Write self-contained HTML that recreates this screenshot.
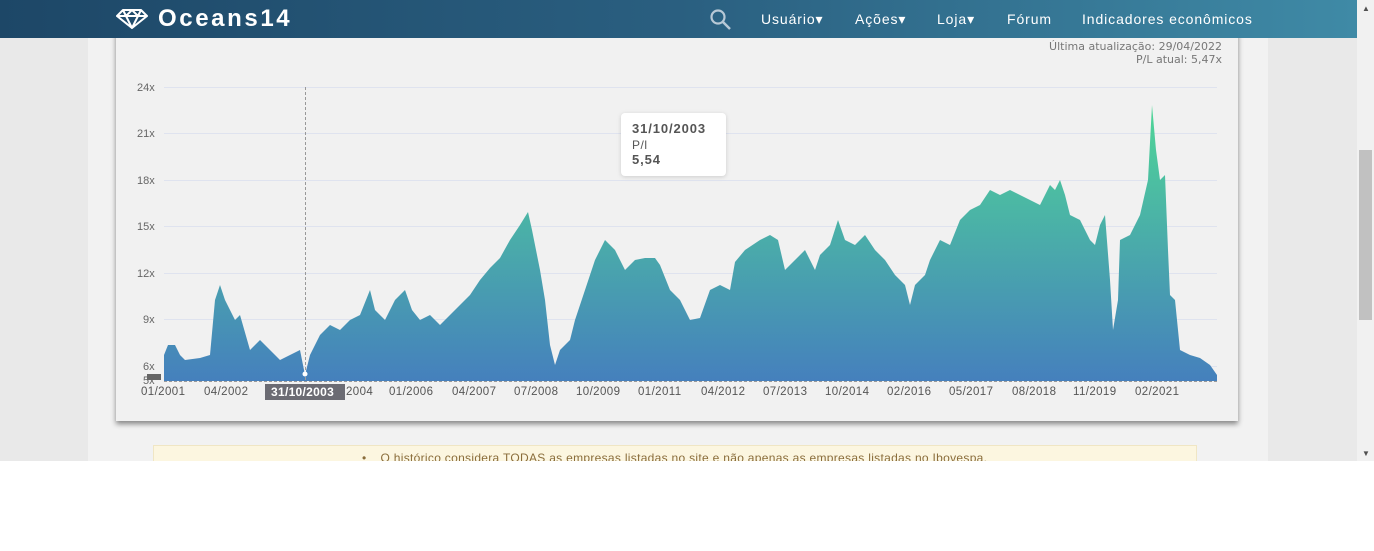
<!DOCTYPE html>
<html><head><meta charset="utf-8"><style>
*{margin:0;padding:0;box-sizing:border-box}
body{width:1374px;height:551px;background:#fff;font-family:"Liberation Sans",sans-serif;overflow:hidden;position:relative}
#screen{position:absolute;left:0;top:0;width:1357px;height:461px;background:#e9e9e9;overflow:hidden}
#col{position:absolute;left:88px;top:0;width:1180px;height:461px;background:#f2f2f2}
#nav{position:absolute;left:0;top:0;width:1357px;height:38px;background:linear-gradient(90deg,#1d4767 0%,#2a5f80 50%,#3f8aa6 100%)}
.logo{position:absolute;left:158px;top:5px;color:#fff;font-weight:bold;font-size:24px;letter-spacing:2.6px}
.menu{position:absolute;top:11px;color:#fff;font-size:14px;letter-spacing:0.9px}
#card{position:absolute;left:116px;top:30px;width:1122px;height:391px;background:#f1f1f1;box-shadow:0 3px 5px rgba(0,0,0,.45)}
.upd{position:absolute;right:135px;font-size:11px;color:#777;font-family:"DejaVu Sans",sans-serif;text-align:right}
.note{position:absolute;left:153px;top:445px;width:1044px;height:20px;background:#fcf6e0;border:1px solid #f0e6c4;font-size:12px;letter-spacing:0.3px;color:#8a6d3b;padding:5px 0 0 208px;white-space:nowrap}
#sb{position:absolute;left:1357px;top:0;width:17px;height:461px;background:#f1f1f1}
#sb .th{position:absolute;left:2px;top:150px;width:13px;height:170px;background:#c1c1c1}
</style></head><body>
<div id="screen">
<div id="col"></div>
<div id="card"></div>
<div class="upd" style="top:40px;right:135px">Última atualização: 29/04/2022</div>
<div class="upd" style="top:53px;right:135px">P/L atual: 5,47x</div>
<svg style="position:absolute;left:0;top:0" width="1357" height="461">
<defs><linearGradient id="g" x1="0" y1="100" x2="0" y2="381" gradientUnits="userSpaceOnUse"><stop offset="0" stop-color="#4fd896"/><stop offset="1" stop-color="#4580bd"/></linearGradient></defs>
<g stroke="#dfe3ef" stroke-width="1">
<line x1="164" y1="87.5" x2="1217" y2="87.5"/><line x1="164" y1="133.5" x2="1217" y2="133.5"/><line x1="164" y1="180.5" x2="1217" y2="180.5"/><line x1="164" y1="226.5" x2="1217" y2="226.5"/><line x1="164" y1="273.5" x2="1217" y2="273.5"/><line x1="164" y1="319.5" x2="1217" y2="319.5"/><line x1="164" y1="366.5" x2="1217" y2="366.5"/>
</g>
<g font-size="11" fill="#666" font-family="Liberation Sans,sans-serif">
<text x="137" y="91">24x</text><text x="137" y="137">21x</text><text x="137" y="184">18x</text><text x="137" y="230">15x</text><text x="137" y="277">12x</text><text x="143" y="323">9x</text><text x="143" y="370">6x</text><text x="143" y="384">5x</text>
</g>
<polygon fill="url(#g)" points="164,381 164,355 168,345 175,345 180,355 185,360 200,358 210,355 215,300 220,285 225,300 235,320 240,315 250,350 260,340 270,350 280,360 290,355 300,350 305,375 310,355 320,335 330,325 340,330 350,320 360,315 370,290 375,310 385,320 395,300 405,290 412,310 420,320 430,315 440,325 450,315 460,305 470,295 480,280 490,268 500,258 510,240 520,225 528,212 532,230 540,270 545,300 550,345 555,365 560,350 570,340 575,320 585,290 595,260 605,240 615,250 625,270 635,260 645,258 655,258 660,265 670,290 680,300 690,320 700,318 710,290 720,285 730,290 735,262 745,250 760,240 770,235 778,240 785,270 795,260 805,250 815,270 820,255 830,245 838,220 845,240 855,245 865,235 875,250 885,260 895,275 905,285 910,305 915,285 925,275 930,260 940,240 950,245 960,220 970,210 980,205 990,190 1000,195 1010,190 1020,195 1030,200 1040,205 1050,185 1055,190 1060,180 1065,195 1070,215 1080,220 1090,240 1095,245 1100,225 1105,215 1110,280 1113,330 1118,300 1120,240 1130,235 1140,215 1148,180 1152,105 1156,150 1160,180 1165,175 1168,250 1170,295 1175,300 1180,350 1190,355 1200,358 1210,365 1217,375 1217,381"/>
<line x1="164" y1="381.5" x2="1217" y2="381.5" stroke="#999" stroke-dasharray="3,2"/>
<line x1="305.5" y1="87" x2="305.5" y2="381" stroke="#999" stroke-dasharray="3,2"/>
<circle cx="305" cy="374" r="2.5" fill="#fff"/>
<rect x="147" y="374" width="14" height="6" fill="#666"/>
<g font-size="11.5" fill="#555" font-family="Liberation Sans,sans-serif" letter-spacing="0.4">
<text x="141" y="395">01/2001</text><text x="204" y="395">04/2002</text><text x="346" y="395">2004</text><text x="389" y="395">01/2006</text><text x="452" y="395">04/2007</text><text x="514" y="395">07/2008</text><text x="576" y="395">10/2009</text><text x="638" y="395">01/2011</text><text x="701" y="395">04/2012</text><text x="763" y="395">07/2013</text><text x="825" y="395">10/2014</text><text x="887" y="395">02/2016</text><text x="949" y="395">05/2017</text><text x="1012" y="395">08/2018</text><text x="1073" y="395">11/2019</text><text x="1135" y="395">02/2021</text>
</g>
<rect x="265" y="384" width="80" height="16" fill="#6b6b73"/>
<text x="271" y="396" font-size="12" font-weight="bold" fill="#fff" font-family="Liberation Sans,sans-serif" letter-spacing="0.3">31/10/2003</text>
<rect x="621" y="113" width="105" height="63" rx="4" fill="#fff" style="filter:drop-shadow(0 1px 2px rgba(0,0,0,.15))"/>
<g font-family="Liberation Sans,sans-serif" fill="#555">
<text x="632" y="133" font-size="13" font-weight="bold" letter-spacing="0.9">31/10/2003</text>
<text x="632" y="149" font-size="12" letter-spacing="0.5">P/l</text>
<text x="632" y="164" font-size="13" font-weight="bold" letter-spacing="0.9">5,54</text>
</g>
</svg>
<div class="note"><span style="margin-right:14px">•</span>O histórico considera TODAS as empresas listadas no site e não apenas as empresas listadas no Ibovespa.</div>
<div id="nav">
<svg style="position:absolute;left:116px;top:9px" width="32" height="20" viewBox="0 0 32 20"><path d="M7 1h18l6 6-15 12L1 7z M1 7h30 M10 7l6 12 6-12 M7 1l3 6 6-6 6 6 3-6" fill="none" stroke="#fff" stroke-width="2" stroke-linejoin="round"/></svg>
<div class="logo">Oceans14</div>
<svg style="position:absolute;left:709px;top:8px" width="24" height="22"><circle cx="9" cy="9" r="6.5" fill="none" stroke="#b8c9d6" stroke-width="2.2"/><line x1="14" y1="14" x2="21" y2="21" stroke="#b8c9d6" stroke-width="2.5"/></svg>
<div class="menu" style="left:761px">Usuário▾</div>
<div class="menu" style="left:855px">Ações▾</div>
<div class="menu" style="left:937px">Loja▾</div>
<div class="menu" style="left:1007px">Fórum</div>
<div class="menu" style="left:1082px">Indicadores econômicos</div>
</div>
</div>
<div id="sb"><div style="position:absolute;left:5px;top:4px;font-size:8px;color:#505050">▲</div><div class="th"></div><div style="position:absolute;left:5px;top:449px;font-size:8px;color:#505050">▼</div></div>
</body></html>
